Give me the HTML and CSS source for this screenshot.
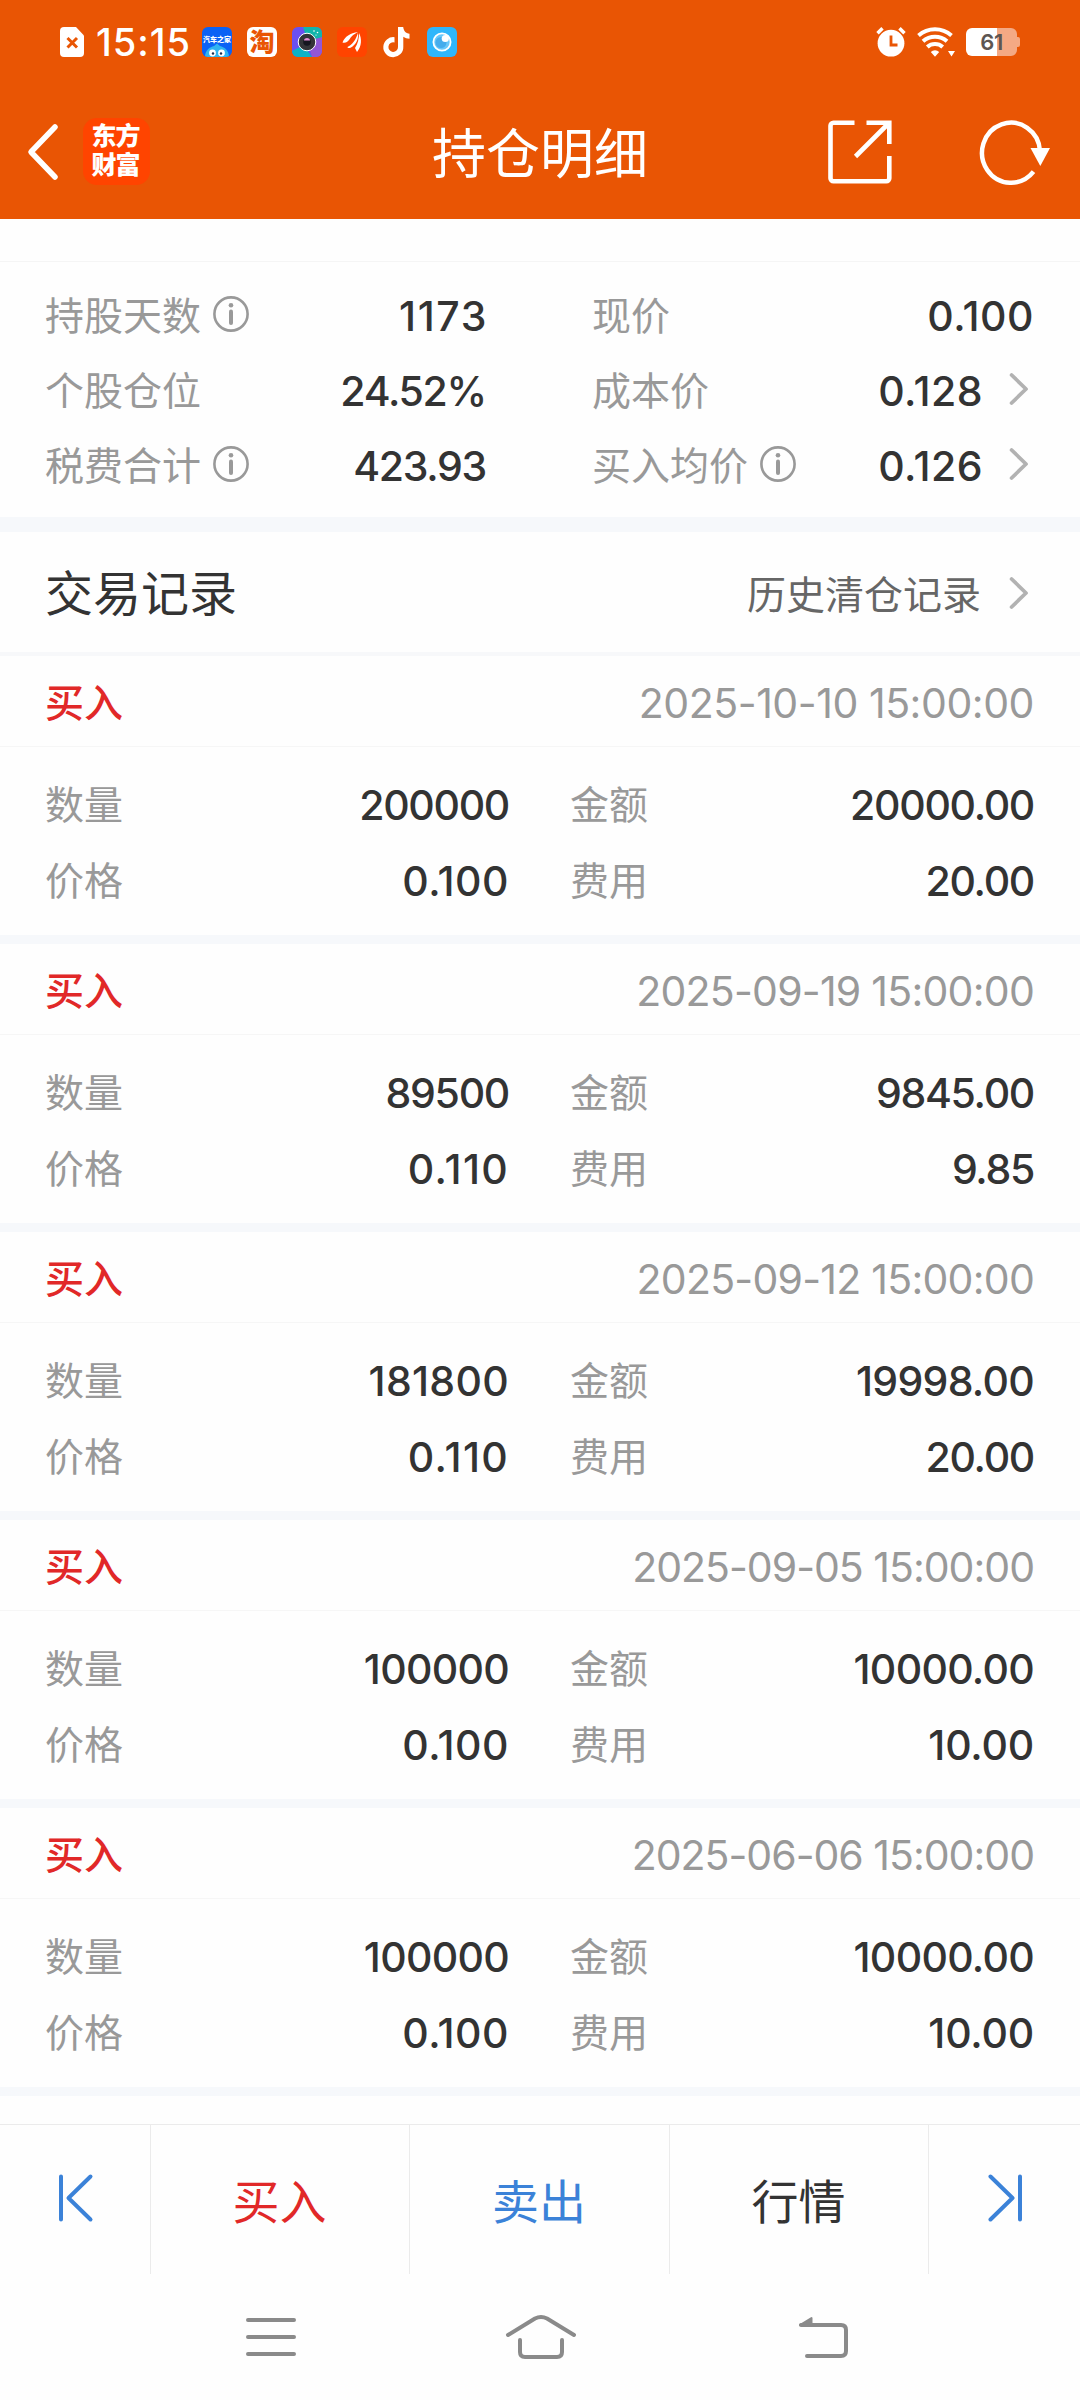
FILE: index.html
```
<!DOCTYPE html>
<html lang="zh-CN">
<head>
<meta charset="utf-8">
<title>持仓明细</title>
<link rel="stylesheet" href="styles.css">
</head>
<body>
<svg class="defs" width="0" height="0" aria-hidden="true">
  <symbol id="info" viewBox="0 0 36 36">
    <circle cx="18" cy="18" r="16.6" fill="none" stroke="#999" stroke-width="2.6"/>
    <circle cx="18" cy="9.3" r="2.3" fill="#999"/>
    <path d="M18 15.5V27" stroke="#999" stroke-width="4" stroke-linecap="round"/>
  </symbol>
  <symbol id="chevron" viewBox="0 0 20 34">
    <path d="M2.6 3L17 17 2.6 31" fill="none" stroke="#b2b2b2" stroke-width="3.8" stroke-linecap="round" stroke-linejoin="round"/>
  </symbol>
</svg>

<header class="top">
  <div class="status">
    <svg class="sim" width="24" height="30" viewBox="0 0 24 30"><path d="M4 0h12l8 8.500v17.500a4 4 0 0 1-4 4H4a4 4 0 0 1-4-4V4a4 4 0 0 1 4-4z" fill="#fff"/><path d="M7.500 11l9.500 9.500M17 11l-9.500 9.500" stroke="#e95504" stroke-width="3"/></svg>
    <span class="time">15:15</span>
    <div class="apps">
      <svg width="30" height="30" viewBox="0 0 30 30"><defs><clipPath id="r"><rect width="30" height="30" rx="6"/></clipPath></defs><g clip-path="url(#r)"><rect width="30" height="30" fill="#0a62f5"/><path d="M3 30c0-7 5-10 9-11l3-2.500 3 2.500c4 1 9 4 9 11z" fill="#2fb4f0"/><circle cx="10.500" cy="26" r="3.400" fill="#fff"/><circle cx="19.500" cy="26" r="3.400" fill="#fff"/><circle cx="11" cy="26.500" r="1.200" fill="#1c2c50"/><circle cx="19" cy="26.500" r="1.200" fill="#1c2c50"/></g><text x="15" y="15" text-anchor="middle" class="tiny">汽车之家</text></svg>
      <svg width="30" height="30" viewBox="0 0 30 30"><rect width="30" height="30" rx="6" fill="#fff"/><text x="15" y="24" text-anchor="middle" class="tao">淘</text></svg>
      <svg width="30" height="30" viewBox="0 0 30 30"><g clip-path="url(#r)"><rect width="30" height="30" fill="#6a50f0"/><path d="M11 0h19v13L15 12z" fill="#12b5ab"/><path d="M30 10v20H20L16 14z" fill="#9257d6"/><path d="M0 24l12-6 8 12H0z" fill="#0bb2c6"/></g><circle cx="15" cy="15" r="8.800" fill="#333438" stroke="#fff" stroke-width="1"/><circle cx="15" cy="15" r="3.800" fill="#15151f"/><path d="M12 13.500a3 2.500 0 0 1 6 0z" fill="#e58ed6"/><circle cx="22" cy="4" r=".8" fill="#fff"/><circle cx="25.500" cy="5.500" r=".8" fill="#fff"/><circle cx="24" cy="8" r=".6" fill="#fff"/></svg>
      <svg width="30" height="30" viewBox="0 0 30 30"><rect width="30" height="30" rx="6" fill="#ff4400"/><path d="M5.500 15.500C8 9.500 13 6 21 5 16 7.500 14 10 12 13c-1.500 2-3.500 3.200-6.500 2.500z" fill="#fff"/><path d="M10.500 20c5-2.500 8.500-7.500 10.500-14 .8 7-2.500 12-7.500 14.800-1.500.5-3 .4-3-.8z" fill="#fff"/><path d="M22 6c3 5.500 2.800 13.500-2 19l-2-4c3-4.500 4-9.500 4-15z" fill="#fff"/></svg>
      <svg width="30" height="30" viewBox="0 0 30 30"><path d="M16 0h5.200c.4 3.800 2.600 6.400 6.300 6.700v5.100c-2.400 0-4.500-.8-6.200-2v9.900A10 10 0 1 1 12.500 10.200v5.300a4.800 4.800 0 1 0 3.500 4.500z" fill="#fff"/></svg>
      <svg width="30" height="30" viewBox="0 0 30 30"><rect width="30" height="30" rx="6" fill="#2fb6fb"/><circle cx="15" cy="15" r="8.600" fill="#68c8fa" stroke="#fff" stroke-width="1.800"/><circle cx="14" cy="15.500" r="5.500" fill="#45acec"/><circle cx="18.300" cy="11.500" r="3.600" fill="#fff"/></svg>
    </div>
    <div class="signals">
      <svg width="30" height="30" viewBox="0 0 30 30"><circle cx="15" cy="16.200" r="13.400" fill="#fff"/><path d="M1.500 6.200l5-5M28.500 6.200l-5-5" stroke="#fff" stroke-width="3.400"/><path d="M15 8.500v9.500h6.500" fill="none" stroke="#e95504" stroke-width="2.800"/></svg>
      <svg width="38" height="30" viewBox="0 0 38 30"><g fill="none" stroke="#fff" stroke-width="4"><path d="M1.500 8.500a25 25 0 0 1 33 0"/><path d="M6 14.300a18 18 0 0 1 24 0"/><path d="M10.300 20a11.500 11.500 0 0 1 15.400 0"/></g><path d="M13.800 25a6 6 0 0 1 8.400 0L18 29.800zM31 24h7l-3.500 5.500z" fill="#fff"/></svg>
      <svg width="54" height="28" viewBox="0 0 54 28"><path d="M31 0h14a6 6 0 0 1 6 6v3h1a2 2 0 0 1 2 2v6a2 2 0 0 1-2 2h-1v3a6 6 0 0 1-6 6H31z" fill="#f4a984"/><path d="M6 0h25v28H6a6 6 0 0 1-6-6V6a6 6 0 0 1 6-6z" fill="#fff"/><text x="25.500" y="22.200" text-anchor="middle" class="charge">61</text></svg>
    </div>
  </div>
  <nav class="bar">
    <svg class="back" width="34" height="58" viewBox="0 0 34 58"><path d="M29 4L5 29l24 25" fill="none" stroke="#fff" stroke-width="5.500" stroke-linecap="round" stroke-linejoin="round"/></svg>
    <div class="logo"><span>东方</span><span>财富</span></div>
    <h1>持仓明细</h1>
    <svg class="share" width="64" height="64" viewBox="0 0 64 64" fill="none" stroke="#fff" stroke-width="4.600"><path d="M26.500 2.800H5.500a3 3 0 0 0-3 3v52.400a3 3 0 0 0 3 3h52.800a3 3 0 0 0 3-3V36"/><path d="M38.500 2.800h22.800V24M61 3L27.500 36.500"/></svg>
    <svg class="reload" width="72" height="66" viewBox="0 0 72 66"><path d="M54.500 53.700A29 30 0 1 1 61 33" fill="none" stroke="#fff" stroke-width="4.500"/><path d="M51.500 30H71L61.300 48z" fill="#fff"/></svg>
  </nav>
</header>

<main>
  <section class="summary">
    <div class="cell"><span class="label">持股天数<svg class="info"><use href="#info"/></svg></span><b class="num days">1173</b></div>
    <div class="cell"><span class="label">现价</span><b class="num price">0.100</b></div>
    <div class="cell"><span class="label">个股仓位</span><b class="num">24.52%</b></div>
    <div class="cell"><span class="label">成本价</span><b class="num price">0.128</b><svg class="chevron"><use href="#chevron"/></svg></div>
    <div class="cell"><span class="label">税费合计<svg class="info"><use href="#info"/></svg></span><b class="num">423.93</b></div>
    <div class="cell"><span class="label">买入均价<svg class="info"><use href="#info"/></svg></span><b class="num price">0.126</b><svg class="chevron"><use href="#chevron"/></svg></div>
  </section>

  <section class="heading">
    <h2>交易记录</h2>
    <span class="history">历史清仓记录</span>
    <svg class="chevron"><use href="#chevron"/></svg>
  </section>

  <article class="record">
    <div class="head"><strong>买入</strong><time class="loose">2025-10-10 15:00:00</time></div>
    <div class="fields">
      <div class="cell"><span class="label">数量</span><b class="num">200000</b></div>
      <div class="cell"><span class="label">金额</span><b class="num">20000.00</b></div>
      <div class="cell"><span class="label">价格</span><b class="num price">0.100</b></div>
      <div class="cell"><span class="label">费用</span><b class="num">20.00</b></div>
    </div>
  </article>
  <article class="record">
    <div class="head"><strong>买入</strong><time class="mid">2025-09-19 15:00:00</time></div>
    <div class="fields">
      <div class="cell"><span class="label">数量</span><b class="num">89500</b></div>
      <div class="cell"><span class="label">金额</span><b class="num">9845.00</b></div>
      <div class="cell"><span class="label">价格</span><b class="num price-wide">0.110</b></div>
      <div class="cell"><span class="label">费用</span><b class="num">9.85</b></div>
    </div>
  </article>
  <article class="record">
    <div class="head"><strong>买入</strong><time class="mid">2025-09-12 15:00:00</time></div>
    <div class="fields">
      <div class="cell"><span class="label">数量</span><b class="num two">181800</b></div>
      <div class="cell"><span class="label">金额</span><b class="num one">19998.00</b></div>
      <div class="cell"><span class="label">价格</span><b class="num price-wide">0.110</b></div>
      <div class="cell"><span class="label">费用</span><b class="num">20.00</b></div>
    </div>
  </article>
  <article class="record">
    <div class="head"><strong>买入</strong><time>2025-09-05 15:00:00</time></div>
    <div class="fields">
      <div class="cell"><span class="label">数量</span><b class="num one">100000</b></div>
      <div class="cell"><span class="label">金额</span><b class="num one">10000.00</b></div>
      <div class="cell"><span class="label">价格</span><b class="num price">0.100</b></div>
      <div class="cell"><span class="label">费用</span><b class="num fee">10.00</b></div>
    </div>
  </article>
  <article class="record">
    <div class="head"><strong>买入</strong><time>2025-06-06 15:00:00</time></div>
    <div class="fields">
      <div class="cell"><span class="label">数量</span><b class="num one">100000</b></div>
      <div class="cell"><span class="label">金额</span><b class="num one">10000.00</b></div>
      <div class="cell"><span class="label">价格</span><b class="num price">0.100</b></div>
      <div class="cell"><span class="label">费用</span><b class="num fee">10.00</b></div>
    </div>
  </article>
</main>

<footer class="actions">
  <div class="step"><svg width="36" height="50" viewBox="0 0 36 50" fill="none" stroke="#3b82d8" stroke-width="4" stroke-linecap="round" stroke-linejoin="round"><path d="M4 3.500v43M33.500 3.500L11.500 25l22 21.500"/></svg></div>
  <div class="action buy">买入</div>
  <div class="action sell">卖出</div>
  <div class="action">行情</div>
  <div class="step last"><svg width="36" height="50" viewBox="0 0 36 50" fill="none" stroke="#3b82d8" stroke-width="4" stroke-linecap="round" stroke-linejoin="round"><path d="M32 3.500v43M2.500 3.500L24.500 25l-22 21.500"/></svg></div>
</footer>

<div class="system">
  <svg width="50" height="40" viewBox="0 0 50 40" stroke="#8a8a8a" stroke-width="4" stroke-linecap="round"><path d="M2 3h46M2 20h46M2 37h46"/></svg>
  <svg class="home" width="72" height="46" viewBox="0 0 72 46" fill="none" stroke="#8a8a8a" stroke-width="4" stroke-linecap="round" stroke-linejoin="round"><path d="M3 21L30 4.500q6-3 12 0L69 21M15 26v12q0 5 5 5h32q5 0 5-5V26"/></svg>
  <svg class="return" width="52" height="42" viewBox="0 0 52 42" fill="none" stroke="#8a8a8a" stroke-width="4" stroke-linecap="round" stroke-linejoin="round"><path d="M4 9h40q5 0 5 5v21q0 5-5 5H10"/><path d="M3 9L14.500 2v7z" fill="#8a8a8a" stroke-width="2"/></svg>
</div>
</body>
</html>
```
FILE: styles.css
```
* { box-sizing: border-box; }
body {
  margin: 0;
  width: 1080px;
  height: 2400px;
  overflow: hidden;
  display: flex;
  flex-direction: column;
  background: #fefefe;
  color: #333;
  font-family: "Noto Sans CJK SC", "Noto Sans", sans-serif;
}
svg { display: block; flex: none; overflow: visible; }
.defs { position: absolute; }
h1, h2 { margin: 0; font-weight: 400; }

/* Header */
.top { height: 219px; background: #e95504; color: #fff; }
.status { height: 84px; display: flex; align-items: center; padding: 0 60px; }
.time {
  width: 106px;
  margin-left: 12px;
  font: 500 38px/50px Inter, sans-serif;
  letter-spacing: 1px;
  white-space: nowrap;
}
.apps { display: flex; gap: 15px; }
.signals { display: flex; align-items: center; gap: 11px; margin-left: auto; }
.tiny { font: 900 7px "Noto Sans CJK SC", sans-serif; fill: #fff; }
.tao { font: 900 25px "Noto Sans CJK SC", sans-serif; fill: #e95504; }
.charge { font: 600 22px Inter, sans-serif; fill: #5d5552; letter-spacing: -.5px; }
.bar { height: 135px; display: flex; align-items: center; padding: 0 29px 0 26px; }
.logo {
  width: 67px;
  height: 67px;
  margin-left: 23px;
  border-radius: 14px;
  background: #ff4400;
  display: flex;
  flex-direction: column;
  justify-content: center;
  align-items: center;
  padding: 0 2px 5px 0;
  font-size: 25px;
  line-height: 29px;
  font-weight: 900;
}
.logo span { letter-spacing: -1px; }
.bar h1 { flex: 1; padding-left: 282px; padding-bottom: 2px; font-size: 54px; line-height: 80px; }
.share { margin-right: 87px; }
.reload { margin-bottom: 2px; }

/* Label / value pairs */
.cell { display: flex; align-items: center; }
.label { display: flex; align-items: center; gap: 12px; padding-bottom: 5px; font-size: 39px; line-height: 50px; color: #999; }
.info { width: 36px; height: 36px; margin-top: 2px; }
.num { margin-left: auto; padding-right: 1px; font: 500 41px/50px Inter, sans-serif; letter-spacing: -1.3px; }
.one { letter-spacing: -.7px; }
.two { letter-spacing: .3px; }
.fee { letter-spacing: -.2px; }
.price { letter-spacing: .5px; }
.price-wide { letter-spacing: 1.3px; }
.days { letter-spacing: 1.6px; }
.chevron { width: 20px; height: 34px; margin-left: 25px; }

.summary {
  height: 256px;
  margin-top: 42px;
  padding: 16px 45px 0;
  border-top: 1px solid #f5f5f5;
  display: grid;
  grid-template-columns: 442px 443px;
  grid-auto-rows: 75px;
  column-gap: 105px;
}
.summary .days { padding-right: 0; margin-right: -1px; }
.cell .chevron { margin-right: 6px; margin-bottom: 4px; }
.heading {
  height: 139px;
  border-top: 15px solid #f6f8fb;
  border-bottom: 4px solid #f7f8fa;
  padding: 0 51px 0 45px;
  display: flex;
  align-items: center;
}
.heading h2 { flex: 1; font-size: 48px; line-height: 70px; padding-bottom: 4px; }
.history { font-size: 39px; line-height: 60px; color: #666; }
.heading .chevron { margin-left: 28px; margin-top: 1px; }

/* Trade records */
.record { height: 288px; border-bottom: 9px solid #f6f8fb; }
.head { height: 91px; border-bottom: 1px solid #f6f6f6; padding: 0 45px; display: flex; align-items: center; justify-content: space-between; }
.head strong { font-size: 39px; line-height: 60px; font-weight: 500; color: #e12828; padding-bottom: 2px; }
.head time { font: 400 41px/50px Inter, sans-serif; letter-spacing: -1px; color: #999; padding: 4px 1px 0 0; }
.head .mid { letter-spacing: -.75px; }
.head .loose { letter-spacing: -.45px; }
.fields { padding: 20px 45px 0; display: grid; grid-template-columns: 465px 465px; grid-auto-rows: 76px; column-gap: 60px; }
.fields .label { padding-bottom: 6px; }

/* Bottom bars */
.actions { margin-top: 28px; height: 150px; border-top: 1px solid #ebebeb; display: grid; grid-template-columns: 151px 259px 260px 259px 151px; }
.actions > div { display: flex; align-items: center; justify-content: center; border-right: 1px solid #ebebeb; }
.actions > div:last-child { border-right: 0; }
.actions .action { font-size: 47px; line-height: 70px; padding: 0 1px 2px 0; }
.buy { color: #e12828; }
.sell { color: #3b82d8; }
.step { padding-bottom: 4px; }
.last { padding-left: 2px; }
.system { height: 126px; display: flex; align-items: center; padding-left: 246px; }
.home { margin-left: 209px; }
.return { margin-left: 220px; }
```
